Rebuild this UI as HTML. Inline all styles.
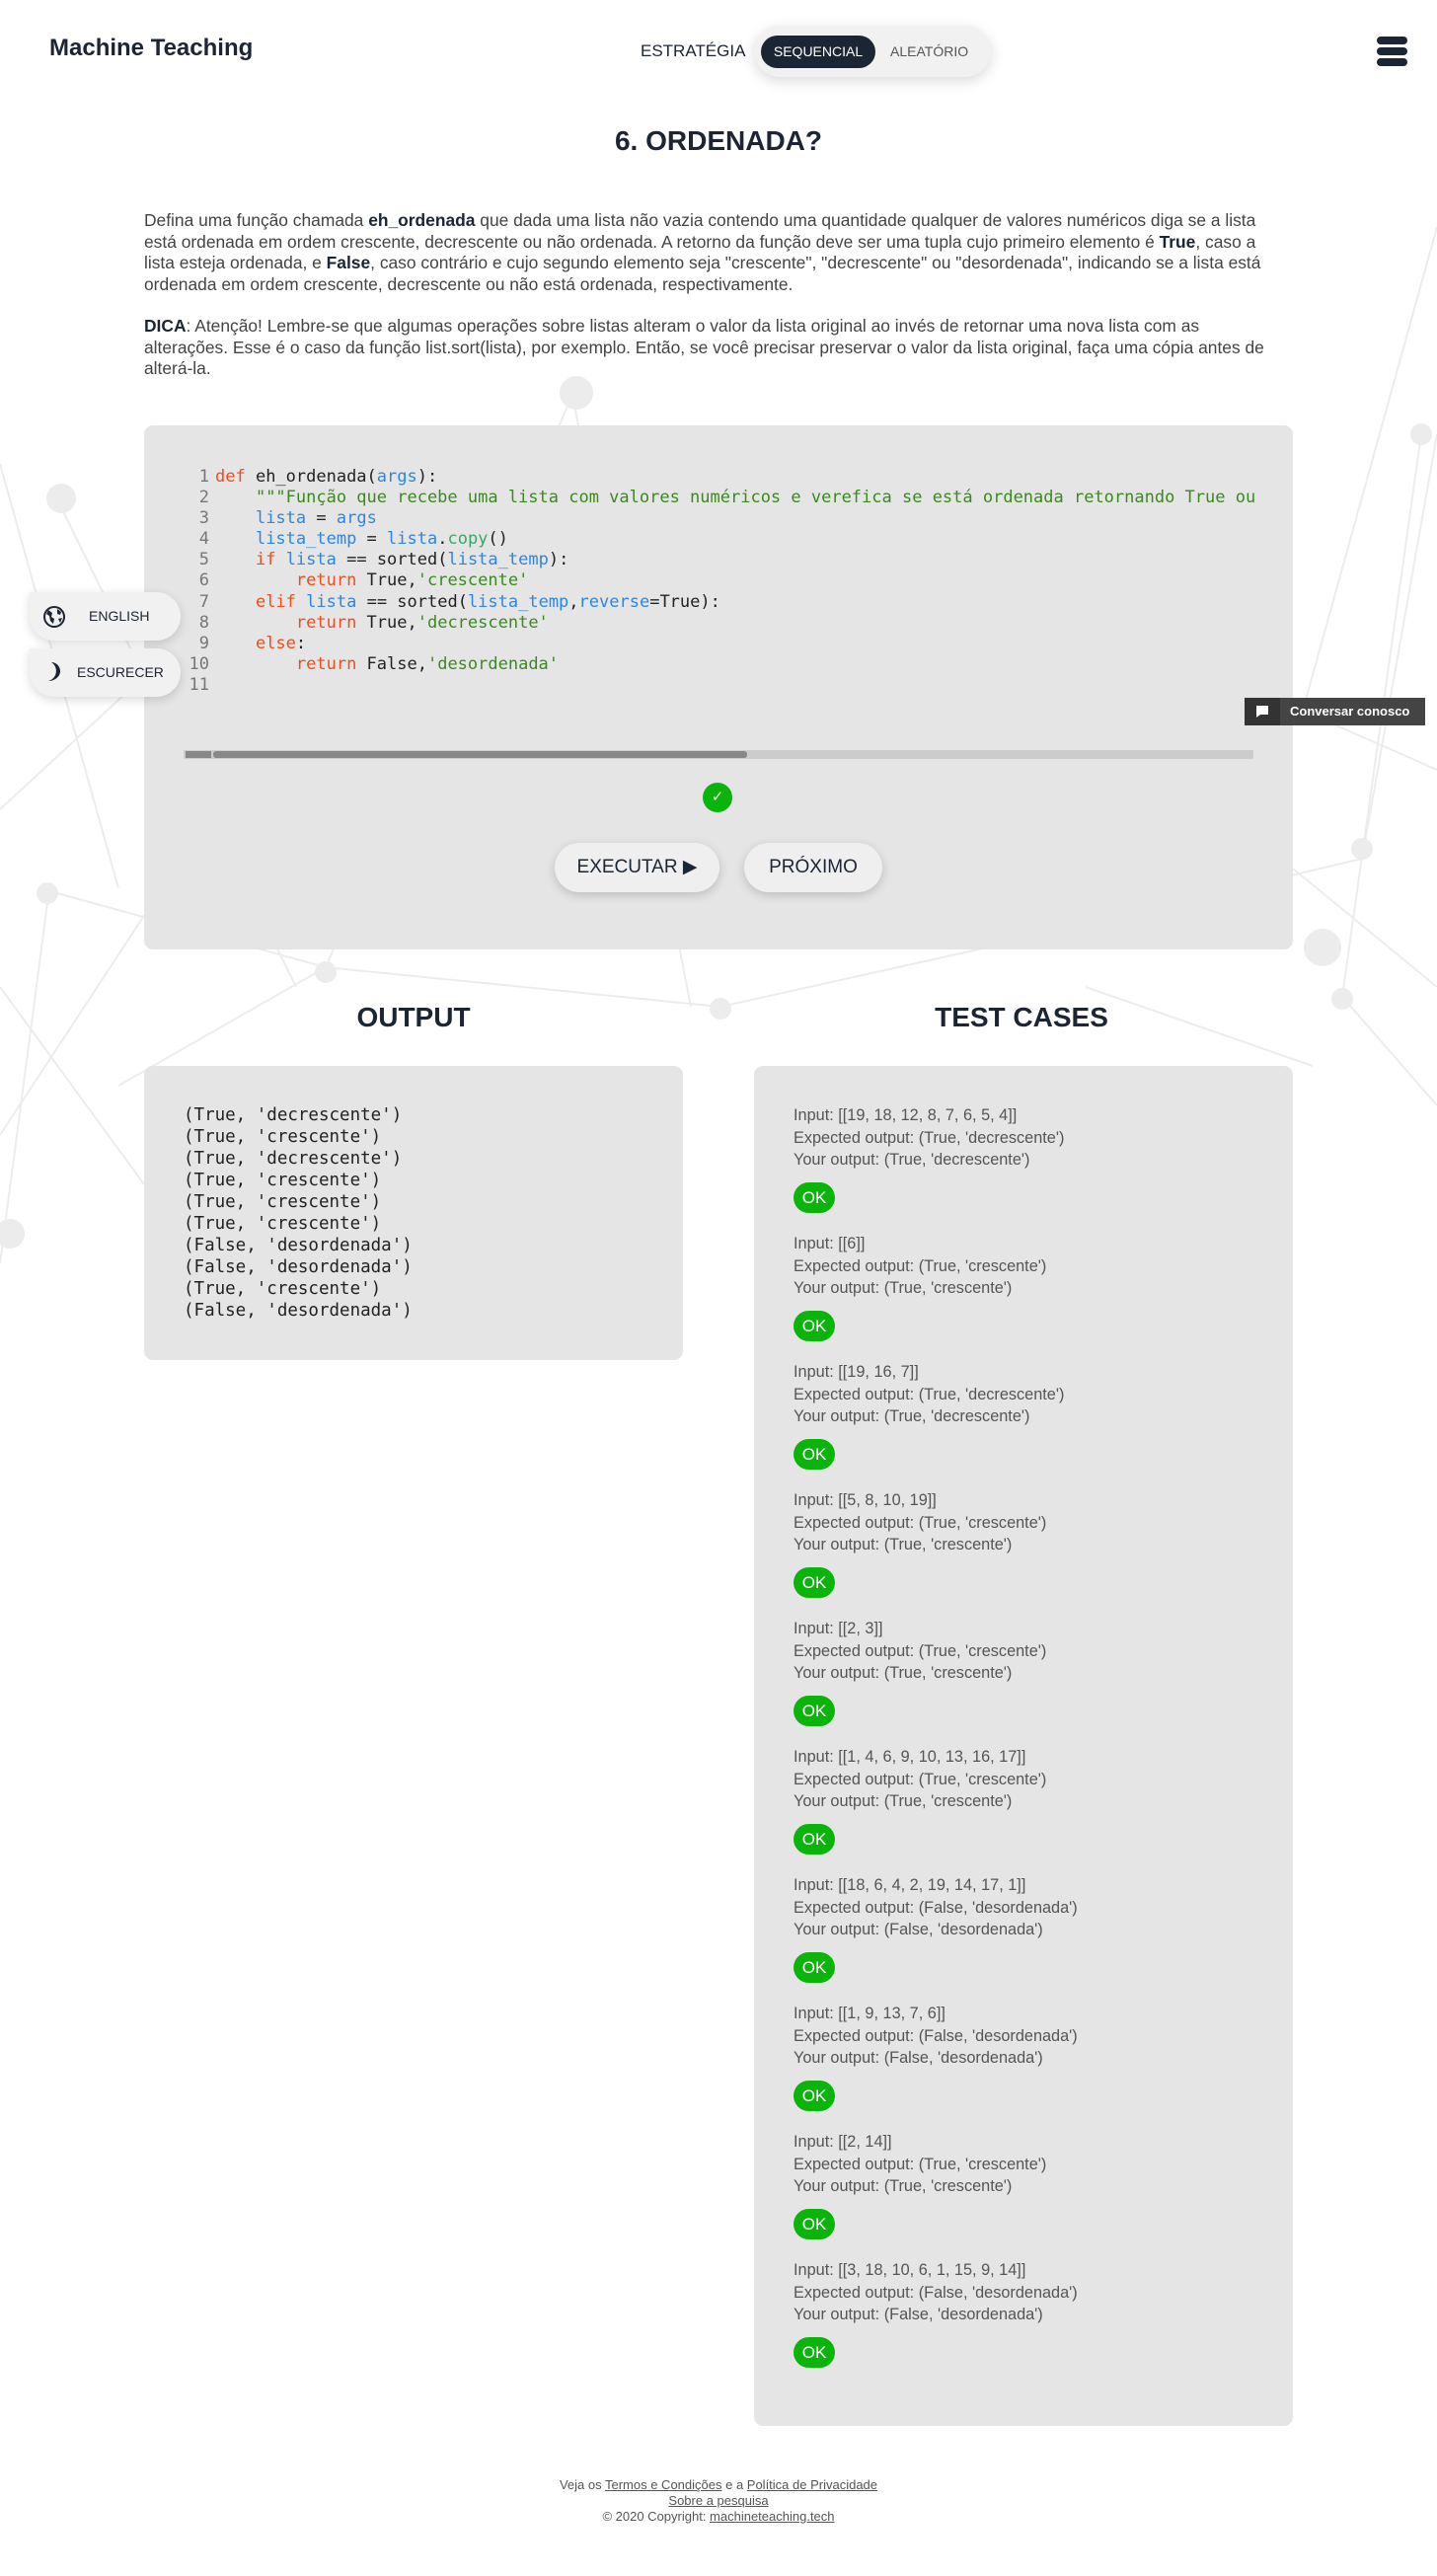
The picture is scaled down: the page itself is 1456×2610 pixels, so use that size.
<!DOCTYPE html>
<html><head><meta charset="utf-8">
<style>
*{box-sizing:border-box;margin:0;padding:0}
body{width:1456px;height:2610px;position:relative;background:#fff;font-family:"Liberation Sans",sans-serif;color:#444;overflow:hidden}
#bg{position:absolute;left:0;top:0;z-index:0}
.abs{position:absolute}
.nav-title{left:50px;top:35px;font-size:24px;font-weight:bold;color:#1c2533}
.strat{left:649px;top:42px;font-size:17px;color:#1c2533}
.pillwrap{left:764px;top:26px;width:240px;height:52px;border-radius:26px;background:#f1f1f1;box-shadow:0 4px 14px rgba(0,0,0,.15)}
.seq{left:771px;top:36px;width:116px;height:33px;border-radius:17px;background:#1c2533;color:#fff;font-size:14px;text-align:center;line-height:33px}
.alea{left:902px;top:36px;font-size:14px;line-height:33px;color:#555}
.ham div{position:absolute;left:1395px;width:31px;height:8px;border-radius:4px;background:#1c2533}
h1{position:absolute;left:0;width:1456px;top:127px;text-align:center;font-size:28px;color:#1c2533}
.desc{left:146px;top:213px;width:1200px;font-size:17.4px;line-height:21.7px;color:#444;white-space:nowrap}
.desc b{color:#1c2533}
.box{background:#e5e5e5;border-radius:9px}
.code{left:146px;top:431px;width:1164px;height:531px}
pre{font-family:"DejaVu Sans Mono","Liberation Mono",monospace}
.codepre{position:absolute;left:186px;top:473px;width:1086px;overflow:hidden;font-size:17px;line-height:21.1px;color:#222;white-space:pre}
.ln{color:#777;display:inline-block;width:26px;text-align:right;margin-right:6px}
.k{color:#e8501f}.v{color:#2e86de}.s{color:#3a8a1f}.f{color:#3aa66a}
.sb{left:186px;top:760px;width:1084px;height:9px;background:#ccc}
.sbt{left:216px;top:761px;width:541px;height:7px;background:#888;border-radius:3px}
.sbt0{left:188px;top:761px;width:26px;height:7px;background:#888}
.check{left:712px;top:793px;width:30px;height:30px;border-radius:50%;background:#0bb40b;color:#fff;font-size:15px;text-align:center;line-height:30px}
.btn{height:50px;border-radius:25px;background:#efefef;box-shadow:0 3px 10px rgba(0,0,0,.18);font-size:19px;color:#1c2533;text-align:center;line-height:50px}
.side{left:30px;width:153px;height:49px;border-radius:0 25px 25px 25px;background:#f1f1f1;box-shadow:0 3px 10px rgba(0,0,0,.15);font-size:14px;color:#1c2533;line-height:49px}
.chat{left:1261px;top:707px;width:183px;height:28px;background:#444;color:#fff;font-size:13px;font-weight:bold;line-height:28px;padding-left:46px}
.chat i{position:absolute;left:0;top:0;width:36px;height:28px;background:#333}
h2{position:absolute;font-size:28px;color:#1c2533;top:1015px;text-align:center;width:500px}
.outp{left:146px;top:1080px;width:546px;height:298px}
.outpre{position:absolute;left:186px;top:1119px;font-size:17.5px;line-height:22px;color:#222;white-space:pre}
.tc{left:764px;top:1080px;width:546px;height:1378px;padding:39px 40px;font-size:16.3px;line-height:22.5px;color:#555}
.tc .it{height:130px}
.ok{display:inline-block;margin-top:11px;width:42px;height:31px;border-radius:16px;background:#0bb40b;color:#fff;text-align:center;line-height:31px;font-size:17px}
.foot{left:0;width:1456px;top:2510px;text-align:center;font-size:13px;line-height:16px;color:#555}
.foot u{color:#555}
</style></head><body>
<svg id="bg" width="1456" height="2610" stroke="#ececec" stroke-width="2" fill="#ececec">
<line x1="0" y1="470" x2="120" y2="900"/><line x1="60" y1="510" x2="300" y2="1000"/><line x1="0" y1="820" x2="130" y2="700"/>
<line x1="40" y1="900" x2="330" y2="980"/><line x1="0" y1="1150" x2="230" y2="800"/><line x1="50" y1="900" x2="0" y2="1280"/>
<line x1="120" y1="1100" x2="330" y2="980"/><line x1="330" y1="980" x2="580" y2="400"/><line x1="330" y1="980" x2="730" y2="1020"/>
<line x1="730" y1="1020" x2="1000" y2="960"/><line x1="1000" y1="960" x2="1380" y2="870"/><line x1="1380" y1="870" x2="1456" y2="440"/>
<line x1="1440" y1="440" x2="1360" y2="1010"/><line x1="1360" y1="1010" x2="1456" y2="1120"/><line x1="1320" y1="720" x2="1456" y2="780"/>
<line x1="1456" y1="230" x2="1320" y2="720"/><line x1="1100" y1="1000" x2="1330" y2="1080"/><line x1="580" y1="400" x2="700" y2="1020"/>
<line x1="1310" y1="880" x2="1456" y2="1000"/><line x1="0" y1="1000" x2="146" y2="1200"/>
<circle cx="62" cy="505" r="14"/><circle cx="584" cy="398" r="16"/><circle cx="1440" cy="440" r="10"/><circle cx="1380" cy="860" r="10"/><circle cx="1340" cy="960" r="18"/><circle cx="330" cy="985" r="10"/><circle cx="730" cy="1022" r="10"/><circle cx="48" cy="905" r="10"/><circle cx="1360" cy="1012" r="10"/><circle cx="10" cy="1250" r="14"/>
</svg>

<div class="abs nav-title">Machine Teaching</div>
<div class="abs strat">ESTRATÉGIA</div>
<div class="abs pillwrap"></div>
<div class="abs seq">SEQUENCIAL</div>
<div class="abs alea">ALEATÓRIO</div>
<div class="ham"><div style="top:37px"></div><div style="top:48px"></div><div style="top:59px"></div></div>

<h1>6. ORDENADA?</h1>
<div class="abs desc">
<p>Defina uma função chamada <b>eh_ordenada</b> que dada uma lista não vazia contendo uma quantidade qualquer de valores numéricos diga se a lista<br>está ordenada em ordem crescente, decrescente ou não ordenada. A retorno da função deve ser uma tupla cujo primeiro elemento é <b>True</b>, caso a<br>lista esteja ordenada, e <b>False</b>, caso contrário e cujo segundo elemento seja "crescente", "decrescente" ou "desordenada", indicando se a lista está<br>ordenada em ordem crescente, decrescente ou não está ordenada, respectivamente.</p>
<p style="margin-top:20px"><b>DICA</b>: Atenção! Lembre-se que algumas operações sobre listas alteram o valor da lista original ao invés de retornar uma nova lista com as<br>alterações. Esse é o caso da função list.sort(lista), por exemplo. Então, se você precisar preservar o valor da lista original, faça uma cópia antes de<br>alterá-la.</p>
</div>

<div class="abs box code"></div>
<pre class="codepre"><span class="ln">1</span><span class="k">def</span> eh_ordenada(<span class="v">args</span>):
<span class="ln">2</span>    <span class="s">"""Função que recebe uma lista com valores numéricos e verefica se está ordenada retornando True ou False"""</span>
<span class="ln">3</span>    <span class="v">lista</span> = <span class="v">args</span>
<span class="ln">4</span>    <span class="v">lista_temp</span> = <span class="v">lista</span>.<span class="f">copy</span>()
<span class="ln">5</span>    <span class="k">if</span> <span class="v">lista</span> == sorted(<span class="v">lista_temp</span>):
<span class="ln">6</span>        <span class="k">return</span> True,<span class="s">'crescente'</span>
<span class="ln">7</span>    <span class="k">elif</span> <span class="v">lista</span> == sorted(<span class="v">lista_temp</span>,<span class="v">reverse</span>=True):
<span class="ln">8</span>        <span class="k">return</span> True,<span class="s">'decrescente'</span>
<span class="ln">9</span>    <span class="k">else</span>:
<span class="ln">10</span>        <span class="k">return</span> False,<span class="s">'desordenada'</span>
<span class="ln">11</span></pre>
<div class="abs sb"></div><div class="abs sbt0"></div><div class="abs sbt"></div>
<div class="abs check">✓</div>
<div class="abs btn" style="left:562px;top:854px;width:167px">EXECUTAR ▶</div>
<div class="abs btn" style="left:754px;top:854px;width:140px">PRÓXIMO</div>

<div class="abs side" style="top:600px;padding-left:60px">
<svg class="abs" style="left:14px;top:14px" width="22" height="22" viewBox="0 0 22 22"><circle cx="11" cy="11" r="10" fill="none" stroke="#1c2533" stroke-width="2"/><path d="M5 4 L9 7 L8 11 L11 13 L10 18 L7 15 L6 10 L3 8Z M14 3 L18 6 L17 9 L14 8Z M15 13 L19 12 L17 17Z" fill="#1c2533"/></svg>ENGLISH</div>
<div class="abs side" style="top:657px;padding-left:48px">
<svg class="abs" style="left:16px;top:13px" width="16" height="22" viewBox="0 0 16 22"><path d="M6 1 C13 5 13 17 3 20 C9 20 15 16 15 10 C15 5 11 1 6 1Z" fill="#1c2533"/></svg>ESCURECER</div>
<div class="abs chat"><i><svg width="36" height="28"><path d="M12 8 h12 v9 h-8 l-4 3z" fill="#fff"/></svg></i>Conversar conosco</div>

<h2 style="left:169px">OUTPUT</h2>
<h2 style="left:785px">TEST CASES</h2>
<div class="abs box outp"></div>
<pre class="outpre">(True, 'decrescente')
(True, 'crescente')
(True, 'decrescente')
(True, 'crescente')
(True, 'crescente')
(True, 'crescente')
(False, 'desordenada')
(False, 'desordenada')
(True, 'crescente')
(False, 'desordenada')</pre>

<div class="abs box tc">
<div class="it">Input: [[19, 18, 12, 8, 7, 6, 5, 4]]<br>Expected output: (True, 'decrescente')<br>Your output: (True, 'decrescente')<br><span class="ok">OK</span></div>
<div class="it">Input: [[6]]<br>Expected output: (True, 'crescente')<br>Your output: (True, 'crescente')<br><span class="ok">OK</span></div>
<div class="it">Input: [[19, 16, 7]]<br>Expected output: (True, 'decrescente')<br>Your output: (True, 'decrescente')<br><span class="ok">OK</span></div>
<div class="it">Input: [[5, 8, 10, 19]]<br>Expected output: (True, 'crescente')<br>Your output: (True, 'crescente')<br><span class="ok">OK</span></div>
<div class="it">Input: [[2, 3]]<br>Expected output: (True, 'crescente')<br>Your output: (True, 'crescente')<br><span class="ok">OK</span></div>
<div class="it">Input: [[1, 4, 6, 9, 10, 13, 16, 17]]<br>Expected output: (True, 'crescente')<br>Your output: (True, 'crescente')<br><span class="ok">OK</span></div>
<div class="it">Input: [[18, 6, 4, 2, 19, 14, 17, 1]]<br>Expected output: (False, 'desordenada')<br>Your output: (False, 'desordenada')<br><span class="ok">OK</span></div>
<div class="it">Input: [[1, 9, 13, 7, 6]]<br>Expected output: (False, 'desordenada')<br>Your output: (False, 'desordenada')<br><span class="ok">OK</span></div>
<div class="it">Input: [[2, 14]]<br>Expected output: (True, 'crescente')<br>Your output: (True, 'crescente')<br><span class="ok">OK</span></div>
<div class="it">Input: [[3, 18, 10, 6, 1, 15, 9, 14]]<br>Expected output: (False, 'desordenada')<br>Your output: (False, 'desordenada')<br><span class="ok">OK</span></div>
</div>

<div class="abs foot">Veja os <u>Termos e Condições</u> e a <u>Política de Privacidade</u><br><u>Sobre a pesquisa</u><br>© 2020 Copyright: <u>machineteaching.tech</u></div>
</body></html>
